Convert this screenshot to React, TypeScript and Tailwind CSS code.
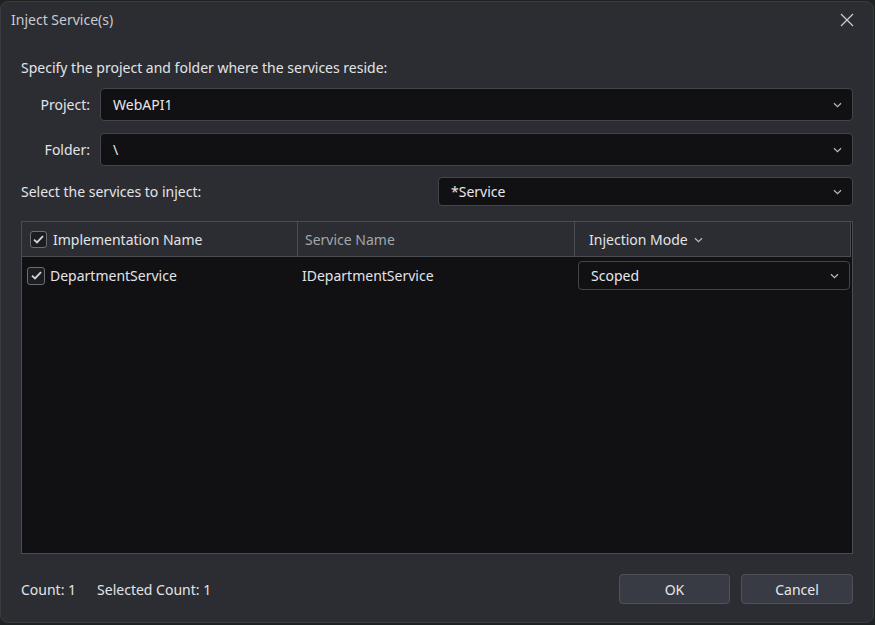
import React from 'react';

const font = { fontFamily: '"Noto Sans", "Open Sans", sans-serif' };

function Chevron({ className = '' }: { className?: string }) {
  return (
    <svg width="9" height="6" viewBox="0 0 9 6" className={className} fill="none">
      <path d="M1 1.2 L4.5 4.6 L8 1.2" stroke="currentColor" strokeWidth="1.2" />
    </svg>
  );
}

function Check({ size = 17 }: { size?: number }) {
  return (
    <span
      className="flex items-center justify-center rounded-[3px] border border-[#6b6e75] bg-[#1c1d21]"
      style={{ width: size, height: size }}
    >
      <svg width="11" height="9" viewBox="0 0 11 9" fill="none">
        <path d="M1 4.6 L4 7.4 L10 1.2" stroke="#d4d6da" strokeWidth="1.8" />
      </svg>
    </span>
  );
}

function ComboBox({ value, className = '' }: { value: string; className?: string }) {
  return (
    <div
      className={`flex items-center justify-between rounded-[4px] border border-[#43454b] bg-[#111114] pl-[12px] pr-[10px] text-[#e8e8ea] ${className}`}
    >
      <span>{value}</span>
      <Chevron className="text-[#b8bac0]" />
    </div>
  );
}

export default function App() {
  return (
    <div className="h-[625px] w-[875px] overflow-hidden bg-[#1d2320] pt-[1px]" style={font}>
      <div className="flex h-[622px] w-[874px] flex-col rounded-[8px] border border-[#3a3c42] bg-[#2b2d32] text-[14px] text-[#e3e4e7]">
        {/* title bar */}
        <div className="flex h-[35px] items-center justify-between pl-[10px] pr-[19px]">
          <span className="text-[14px] text-[#c9cbd0]">Inject Service(s)</span>
          <svg width="14" height="14" viewBox="0 0 14 14" fill="none">
            <path d="M1 1 L13 13 M13 1 L1 13" stroke="#c8cacf" strokeWidth="1.3" />
          </svg>
        </div>

        <div className="flex flex-1 flex-col px-[20px]">
          <div className="mt-[21px] h-[20px] leading-[20px]">Specify the project and folder where the services reside:</div>

          <div className="mt-[10px] flex items-center gap-[10px]">
            <span className="w-[69px] text-right">Project:</span>
            <ComboBox value="WebAPI1" className="h-[33px] flex-1" />
          </div>

          <div className="mt-[12px] flex items-center gap-[10px]">
            <span className="w-[69px] text-right">Folder:</span>
            <ComboBox value="\" className="h-[33px] flex-1" />
          </div>

          <div className="mt-[11px] flex items-center justify-between">
            <span>Select the services to inject:</span>
            <ComboBox value="*Service" className="h-[29px] w-[415px]" />
          </div>

          {/* table */}
          <div className="mt-[15px] flex h-[333px] flex-col border border-[#4a4c53] bg-[#111114]">
            <div className="mr-[1px] grid h-[35px] grid-cols-[276px_277px_1fr] border-b border-[#4a4c53] bg-[#2b2d32]">
              <div className="flex items-center gap-[6px] border-r border-[#4a4c53] pl-[8px]">
                <Check size={17} />
                <span>Implementation Name</span>
              </div>
              <div className="flex items-center border-r border-[#4a4c53] pl-[7px] text-[#a4a7ad]">Service Name</div>
              <div className="flex items-center gap-[6px] border-r border-[#4a4c53] pl-[14px]">
                <span>Injection Mode</span>
                <Chevron className="mt-[2px] text-[#b8bac0]" />
              </div>
            </div>
            <div className="grid h-[37px] grid-cols-[276px_277px_1fr] items-center">
              <div className="flex items-center gap-[5px] pl-[5px]">
                <Check size={18} />
                <span>DepartmentService</span>
              </div>
              <div className="pl-[4px]">IDepartmentService</div>
              <div className="pl-[3px] pr-[2px]">
                <ComboBox value="Scoped" className="h-[29px]" />
              </div>
            </div>
          </div>

          {/* footer */}
          <div className="mt-[20px] flex items-center justify-between">
            <div className="flex gap-[21px]">
              <span>Count: 1</span>
              <span>Selected Count: 1</span>
            </div>
            <div className="flex gap-[11px]">
              <button className="h-[30px] w-[111px] rounded-[4px] border border-[#4f525a] bg-[#383b43] text-[#e6e7ea]">OK</button>
              <button className="h-[30px] w-[112px] rounded-[4px] border border-[#4f525a] bg-[#383b43] text-[#e6e7ea]">Cancel</button>
            </div>
          </div>
        </div>
      </div>
    </div>
  );
}
